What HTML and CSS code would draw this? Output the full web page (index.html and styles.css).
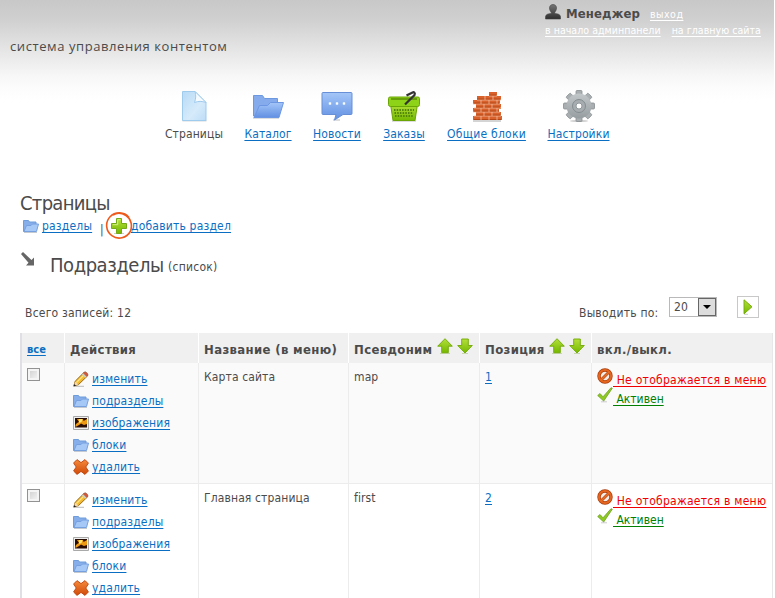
FILE: index.html
```html
<!DOCTYPE html>
<html lang="ru">
<head>
<meta charset="utf-8">
<title>Страницы</title>
<link rel="stylesheet" href="styles.css">
</head>
<body>
<svg class="defs" aria-hidden="true">
  <defs>
    <linearGradient id="gBlue" x1="0" y1="0" x2="0" y2="1"><stop offset="0" stop-color="#a4c6f8"/><stop offset="1" stop-color="#6290e2"/></linearGradient>
    <linearGradient id="gPage" x1="0" y1="0" x2="1" y2="1"><stop offset="0" stop-color="#b7daf5"/><stop offset=".6" stop-color="#d6ebfb"/><stop offset="1" stop-color="#bcdcf6"/></linearGradient>
    <linearGradient id="gGreen" x1="0" y1="0" x2="0" y2="1"><stop offset="0" stop-color="#b4e03a"/><stop offset="1" stop-color="#74b800"/></linearGradient>
    <linearGradient id="gOrange" x1="0" y1="0" x2="0" y2="1"><stop offset="0" stop-color="#f58a3c"/><stop offset="1" stop-color="#d04a08"/></linearGradient>
    <linearGradient id="gGray" x1="0" y1="0" x2="0" y2="1"><stop offset="0" stop-color="#c2c7c9"/><stop offset="1" stop-color="#969da0"/></linearGradient>
    <linearGradient id="gUser" x1="0" y1="0" x2="0" y2="1"><stop offset="0" stop-color="#757575"/><stop offset="1" stop-color="#2e2e2e"/></linearGradient>
  </defs>
  <symbol id="user" viewBox="0 0 16 16"><path d="M4.500 4C4.500 1.700 6 .5 8 .5s3.500 1.200 3.500 3.500c0 2-.9 3.300-1.700 4.300v1.200c3 .2 5.500 1 5.700 3V15H.5v-2.500c.2-2 2.700-2.800 5.700-3V8.300C5.400 7.300 4.500 6 4.500 4z" fill="url(#gUser)" stroke="#444" stroke-width=".6"/></symbol>
  <symbol id="page" viewBox="0 0 32 32"><path d="M4.500 30.800h24" stroke="#b9bec2" stroke-width="1"/><path d="M4.500 1.500h12.500l11 11v18H4.500z" fill="url(#gPage)" stroke="#9fcbed"/><path d="M17 1.500c1 4 1 7-.5 11 4-1.500 7-1.500 11.500 0z" fill="#f6fbff" stroke="#9fcbed"/></symbol>
  <symbol id="folder" viewBox="0 0 32 32"><path d="M1 28h26" stroke="#b9bec2"/><path d="M1.500 26V5.500h9l2 3h13V25z" fill="#85abed" stroke="#6b98df"/><path d="M2 27.500l5.500-12h8l3-3h13l-4.500 15z" fill="url(#gBlue)" stroke="#6d97e2"/></symbol>
  <symbol id="minifolder" viewBox="0 0 16 16"><path d="M1 14.500h13" stroke="#c5cad0"/><path d="M.5 13.500v-11h5l1 1.500H13v9z" fill="#86aeea" stroke="#6f9cdb"/><path d="M1 13.500l2.500-6H8L9.500 6h6l-2 7.500z" fill="#a5c8f7" stroke="#76a0de"/></symbol>
  <symbol id="bubble" viewBox="0 0 32 32"><path d="M12 30h7" stroke="#bbb"/><path d="M2 2.500h28q1 0 1 1v20q0 1-1 1h-8L13.500 30l1.500-5.500H2q-1 0-1-1v-20q0-1 1-1z" fill="url(#gBlue)" stroke="#668fd8"/><path d="M8 12.500h2v2H8zM15 12.500h2v2h-2zM22 12.500h2v2h-2z" fill="#fff" stroke="#e6f0ff" stroke-width=".5"/></symbol>
  <symbol id="basket" viewBox="0 0 34 32"><path d="M5 31h24" stroke="#bbb"/><path d="M3.500 14h27l-2.500 16.500H6z" fill="url(#gGreen)" stroke="#6ba505"/><path d="M1.500 8.500q0-1.500 1.500-1.500h28q1.500 0 1.500 1.500v6q0 2-2 2h-27q-2 0-2-2z" fill="#8fd318" stroke="#6aa605"/><path d="M4 9h26" stroke="#5c9308" stroke-width="1.600"/><path d="M7 20h20M7.500 23h19M8 26h18" stroke="#528506" stroke-width="1.800" stroke-dasharray="1.500 1.200"/><path d="M18 14.500L27.500 5c1-2-.5-3.300-2-2.600L19.500 5.500" fill="none" stroke="#333" stroke-width="2.200"/></symbol>
  <symbol id="wall" viewBox="0 0 32 32"><path d="M2 31h28" stroke="#aaa"/><path d="M18 2h8v4h4v4h-1v4h1v5h-2v3h2v4h1v4H2v-4h3v-4H2v-4h3v-4H2v-4h4V6h12z" fill="#d9622c"/><path d="M6 10h24M2 14h27M3 18h27M2 22h27M3 26h27M18 6h8" stroke="#f3bd9f" stroke-width=".8"/><path d="M6 9h23M3 13h25M5 17h24M3 21h25M5 25h24M3 29.500h27M18 5h7" stroke="#b54716"/><path d="M14 6v4M22 6v4M10 10v4M18 10v4M26 10v4M13 14v4M21 14v4M10 18v4M18 18v4M26 18v4M13 22v4M21 22v4M10 26v4M18 26v4M26 26v4" stroke="#f3bd9f" stroke-width=".8"/></symbol>
  <symbol id="gear" viewBox="0 0 32 32"><ellipse cx="16" cy="31" rx="9" ry="1" fill="#ccc"/><g fill="#a9afb1" stroke="#888e91" stroke-width=".8"><rect x="13" y=".5" width="6" height="31" rx="1"/><rect x="13" y=".5" width="6" height="31" rx="1" transform="rotate(45 16 16)"/><rect x="13" y=".5" width="6" height="31" rx="1" transform="rotate(90 16 16)"/><rect x="13" y=".5" width="6" height="31" rx="1" transform="rotate(135 16 16)"/></g><circle cx="16" cy="16" r="12.500" fill="url(#gGray)"/><circle cx="16" cy="16" r="6.500" fill="#a6acaf" stroke="#858c90"/><circle cx="16" cy="16" r="3" fill="#fff" stroke="#92999c"/></symbol>
  <symbol id="plus" viewBox="0 0 16 16"><path d="M3 15.500h10" stroke="#ccc"/><path d="M5.500.5h5v5h5v5h-5v5h-5v-5h-5v-5h5z" fill="url(#gGreen)" stroke="#74aa18"/><path d="M6.700 1.700h2.600M1.700 6.700h5V2" stroke="#d4ef86" fill="none"/></symbol>
  <symbol id="diag" viewBox="0 0 16 16"><path d="M1 3l2-2 8.500 8 2.500-2.500V14.500H6l2.500-2.700z" fill="#666"/></symbol>
  <symbol id="up" viewBox="0 0 16 16"><path d="M3 15.500h10" stroke="#c6d5ae"/><path d="M8 .7l7.300 7.500h-4v6.500H4.700V8.200h-4z" fill="url(#gGreen)" stroke="#70a800" stroke-width=".9"/></symbol>
  <symbol id="down" viewBox="0 0 16 16"><path d="M5 15.500h6" stroke="#c6d5ae"/><path d="M8 15L.7 7.500h4V1h6.600v6.500h4z" fill="url(#gGreen)" stroke="#70a800" stroke-width=".9"/></symbol>
  <symbol id="pencil" viewBox="0 0 16 16"><path d="M2 15.300h9" stroke="#bbb"/><path d="M.8 15l1.400-4.800L11 1.400l3.600 3.400L5.500 13.600z" fill="#f5b92c" stroke="#8a5c13" stroke-width=".9"/><path d="M3.500 11.500l8.300-8.300" stroke="#ffe68a" stroke-width="1.200"/><path d="M10 2.400l1.500-1.500c1-.8 4.200 2 3.400 3.400L13.500 5.700z" fill="#d3593d" stroke="#8b5b43" stroke-width=".6"/><path d="M9 3.400l1.100-1.100 3.500 3.500-1.100 1z" fill="#c9ced1"/><path d="M2.200 10.600l3 3L.8 15z" fill="#f3dab0"/><path d="M.5 15.500l.8-2.500 1.700 1.700z" fill="#222"/></symbol>
  <symbol id="photo" viewBox="0 0 16 14"><path d="M.5.500h15v13H.5z" fill="#efefef" stroke="#a9a9a9"/><path d="M2 2h12v9.500H2z" fill="#2a0d02"/><path d="M2.500 11V9C3 7.500 4.500 6.500 6 6L4 3h6l.5 2L14 3v5l-3 1-3-1.500L6 9z" fill="#ef9a15"/><path d="M6 3h3.500L8.500 6 6 7z" fill="#ffe774"/></symbol>
  <symbol id="cross" viewBox="0 0 16 16"><path d="M4 .6l4 3 4-3L15.400 4l-2.600 4 2.600 4L12 15.400l-4-3-4 3L.6 12l2.600-4L.6 4z" fill="url(#gOrange)" stroke="#bd440d" stroke-width=".9" stroke-linejoin="round"/></symbol>
  <symbol id="ban" viewBox="0 0 16 16"><circle cx="8" cy="8" r="6" fill="#f3ece8" stroke="#a93a08" stroke-width="3.400"/><path d="M4 12l8-8" stroke="#b3440e" stroke-width="2.800"/><circle cx="8" cy="8" r="6" fill="none" stroke="#e4651f" stroke-width="2.100"/><path d="M4 12l8-8" stroke="#e96e27" stroke-width="1.700"/></symbol>
  <symbol id="check" viewBox="0 0 16 16"><path d="M4 14.800h6" stroke="#ccc"/><path d="M.7 8.500L3 6.500l3 3.300L14 .7l1.300.5L6.700 14z" fill="#8fca21" stroke="#6e9f24" stroke-width=".8"/></symbol>
  <symbol id="play" viewBox="0 0 10 16"><path d="M1 15.300h4" stroke="#ccc"/><path d="M1 .8l8 7-8 7z" fill="url(#gGreen)" stroke="#70a800" stroke-width=".9"/></symbol>
</svg>

<header class="top">
  <div class="tagline">система управления контентом</div>
  <div class="account">
    <div class="who"><svg class="i16"><use href="#user"/></svg><b>Менеджер</b><a href="#">выход</a></div>
    <div class="quick"><a href="#">в начало админпанели</a><a href="#">на главную сайта</a></div>
  </div>
</header>

<nav class="menu">
  <div class="m1"><svg><use href="#page"/></svg><span>Страницы</span></div>
  <div class="m2"><svg><use href="#folder"/></svg><a href="#">Каталог</a></div>
  <div class="m3"><svg><use href="#bubble"/></svg><a href="#">Новости</a></div>
  <div class="m4"><svg><use href="#basket"/></svg><a href="#">Заказы</a></div>
  <div class="m5"><svg><use href="#wall"/></svg><a href="#">Общие блоки</a></div>
  <div class="m6"><svg><use href="#gear"/></svg><a href="#">Настройки</a></div>
</nav>

<main>
  <h1>Страницы</h1>
  <div class="tools"><svg class="i16"><use href="#minifolder"/></svg><a class="sections" href="#">разделы</a><span class="bar">|</span><span class="add"><svg class="i16"><use href="#plus"/></svg><svg class="ring" viewBox="0 0 28 28"><path d="M24 5.500A12.600 12.600 0 1 0 25.300 19.500C27.500 14 26.500 7 21 3.500S11 1 8 3" fill="none" stroke="#ee5a1c" stroke-width="1.600"/></svg></span><a href="#">добавить раздел</a></div>
  <div class="sub"><svg class="i16"><use href="#diag"/></svg><h2>Подразделы</h2><span>(список)</span></div>
  <div class="pager">
    <span class="total">Всего записей: 12</span>
    <span class="per">Выводить по:</span>
    <span class="select"><span>20</span><i><svg viewBox="0 0 8 4"><path d="M0 0h8L4 4z"/></svg></i></span>
    <button><svg viewBox="0 0 10 16"><use href="#play"/></svg></button>
  </div>

  <div class="grid">
    <div class="row head">
      <div><a class="all" href="#">все</a></div>
      <div>Действия</div>
      <div>Название (в меню)</div>
      <div>Псевдоним<svg class="i16"><use href="#up"/></svg><svg class="i16"><use href="#down"/></svg></div>
      <div>Позиция<svg class="i16"><use href="#up"/></svg><svg class="i16"><use href="#down"/></svg></div>
      <div>вкл./выкл.</div>
    </div>
    <div class="row odd">
      <div><span class="cb"></span></div>
      <div class="acts">
        <p><svg class="i16"><use href="#pencil"/></svg><a href="#">изменить</a></p>
        <p><svg class="i16"><use href="#minifolder"/></svg><a href="#">подразделы</a></p>
        <p><svg class="i16"><use href="#photo"/></svg><a href="#">изображения</a></p>
        <p><svg class="i16"><use href="#minifolder"/></svg><a href="#">блоки</a></p>
        <p><svg class="i16"><use href="#cross"/></svg><a href="#">удалить</a></p>
      </div>
      <div>Карта сайта</div>
      <div>map</div>
      <div><a href="#">1</a></div>
      <div class="state">
        <p><svg class="i16"><use href="#ban"/></svg><a class="off" href="#">&nbsp;Не отображается в меню</a></p>
        <p><svg class="i16"><use href="#check"/></svg><a class="on" href="#">&nbsp;Активен</a></p>
      </div>
    </div>
    <div class="row">
      <div><span class="cb"></span></div>
      <div class="acts">
        <p><svg class="i16"><use href="#pencil"/></svg><a href="#">изменить</a></p>
        <p><svg class="i16"><use href="#minifolder"/></svg><a href="#">подразделы</a></p>
        <p><svg class="i16"><use href="#photo"/></svg><a href="#">изображения</a></p>
        <p><svg class="i16"><use href="#minifolder"/></svg><a href="#">блоки</a></p>
        <p><svg class="i16"><use href="#cross"/></svg><a href="#">удалить</a></p>
      </div>
      <div>Главная страница</div>
      <div>first</div>
      <div><a href="#">2</a></div>
      <div class="state">
        <p><svg class="i16"><use href="#ban"/></svg><a class="off" href="#">&nbsp;Не отображается в меню</a></p>
        <p><svg class="i16"><use href="#check"/></svg><a class="on" href="#">&nbsp;Активен</a></p>
      </div>
    </div>
  </div>
</main>
</body>
</html>
```
FILE: styles.css
```css
* { box-sizing: border-box; margin: 0; padding: 0; }
html, body { height: 598px; overflow: hidden; }
html { background: #fff; }
body { width: 774px; color: #4b4b4b; font: 12px/22px "DejaVu Sans Condensed", "DejaVu Sans", sans-serif; font-stretch: condensed; letter-spacing: .12px; }
a { color: #0a6fc2; text-decoration: underline; text-underline-offset: 2px; text-decoration-thickness: 1px; }
svg { display: block; flex: none; }
.defs { position: absolute; width: 0; height: 0; }
.i16 { width: 16px; height: 16px; }

.top { height: 88px; display: flex; justify-content: space-between; white-space: nowrap; background: linear-gradient(#c8c8c8 0, #d0d0d0 20px, #e4e4e4 48px, #f7f7f7 76px, #fcfcfc 88px); }
.tagline { padding: 35px 0 0 10px; font: 13px/22px "Open Sans", sans-serif; letter-spacing: .58px; }
.account { width: 229px; padding-top: 4px; }
.who { display: flex; height: 18px; line-height: 19px; }
.who b { margin-left: 5px; font-size: 13px; width: 84px; }
.who a, .quick a { color: #fff; font-size: 10.500px; line-height: 20px; letter-spacing: .05px; }
.who a { letter-spacing: .5px; }
.quick { display: flex; gap: 11px; height: 16px; }
.quick a { line-height: 16px; }

.menu { display: flex; gap: 22px; padding-left: 165px; white-space: nowrap; background: linear-gradient(#fcfcfc, #fff 12px); }
.menu div { display: flex; flex-direction: column; align-items: center; }
.menu svg { width: 34px; height: 32px; margin: 2px 0 1px; }
.m1 { width: 58px; } .m2 { width: 46px; } .m3 { width: 48px; }
.m4 { width: 42px; } .m5 { width: 79px; letter-spacing: .25px; } .m6 { width: 61px; }

main { padding-left: 20px; }
h1 { margin-top: 46px; font-size: 20px; line-height: 25px; font-weight: 400; letter-spacing: -.7px; }
.tools { display: flex; align-items: center; height: 20px; padding-left: 3px; white-space: nowrap; letter-spacing: .2px; }
.sections { width: 58px; margin-left: 3px; }
.bar { padding-top: 7px; width: 7px; }
.add { position: relative; margin-left: 2px; width: 22px; padding-right: 2px; display: flex; justify-content: center; }
.ring { position: absolute; left: -4px; top: -6px; width: 28px; height: 28px; }
.sub { display: flex; height: 40px; margin-top: 9px; }
.sub .i16 { margin-top: 6px; }
.sub h2 { width: 118px; margin-left: 14px; font-size: 20px; font-weight: 400; line-height: 40px; letter-spacing: -.45px; }
.sub span { line-height: 45px; letter-spacing: .25px; }
.pager { display: flex; height: 48px; padding-top: 10px; line-height: 32px; white-space: nowrap; letter-spacing: .22px; }
.total { width: 554px; padding: 2px 0 0 5px; }
.per { width: 95px; padding: 2px 0 0 5px; }
.select { width: 48px; height: 20px; margin-top: 2px; border: 1px solid #b9b9b9; display: flex; justify-content: space-between; line-height: 19px; padding-left: 4px; }
.select i { width: 18px; height: 18px; border: 1px solid #666; background: #ddd; display: flex; align-items: center; justify-content: center; }
.select i svg { width: 8px; height: 4px; }
button { margin-left: 20px; width: 22px; height: 22px; border: 1px solid #c8c8c8; background: #fff; display: flex; align-items: center; justify-content: center; margin-top: 1px; }
button svg { width: 10px; height: 16px; }

.grid { border-left: 2px solid #e0e0e4; border-right: 1px solid #e7e7ea; width: 753px; }
.row { display: grid; grid-template-columns: 42px 134px 150px 131px 112px 181px; height: 121px; border-bottom: 1px solid #ececec; white-space: nowrap; }
.row > div { border-left: 1px solid #ececec; padding: 3px 0 0 5px; }
.row > div:first-child { border-left: 0; }
.odd { background: #fafafa; }
.head { height: 30px; background: #f0f0f0; border: 0; font-size: 13px; font-weight: 700; line-height: 27px; letter-spacing: .35px; }
.head > div { display: flex; border-left-color: #fff; }
.head .i16 { margin: 2px 0 0 4px; }
.all { font-size: 11px; letter-spacing: 0; }
.cb { display: block; width: 13px; height: 13px; margin-top: 2px; border: 1px solid #929292; background: linear-gradient(135deg, #ccc, #f8f8f8); box-shadow: inset 0 0 0 2px #f4f4f4; }
.acts p { display: flex; align-items: center; gap: 3px; height: 22px; letter-spacing: .15px; }
.row > .acts { padding: 5px 0 0 8px; }
.row > .state { padding: 5px 0 0 5px; }
.state p { display: flex; height: 19px; line-height: 24px; }
.state .off { color: #f00000; letter-spacing: .27px; }
.state .on { color: #008000; letter-spacing: 0; }
```
